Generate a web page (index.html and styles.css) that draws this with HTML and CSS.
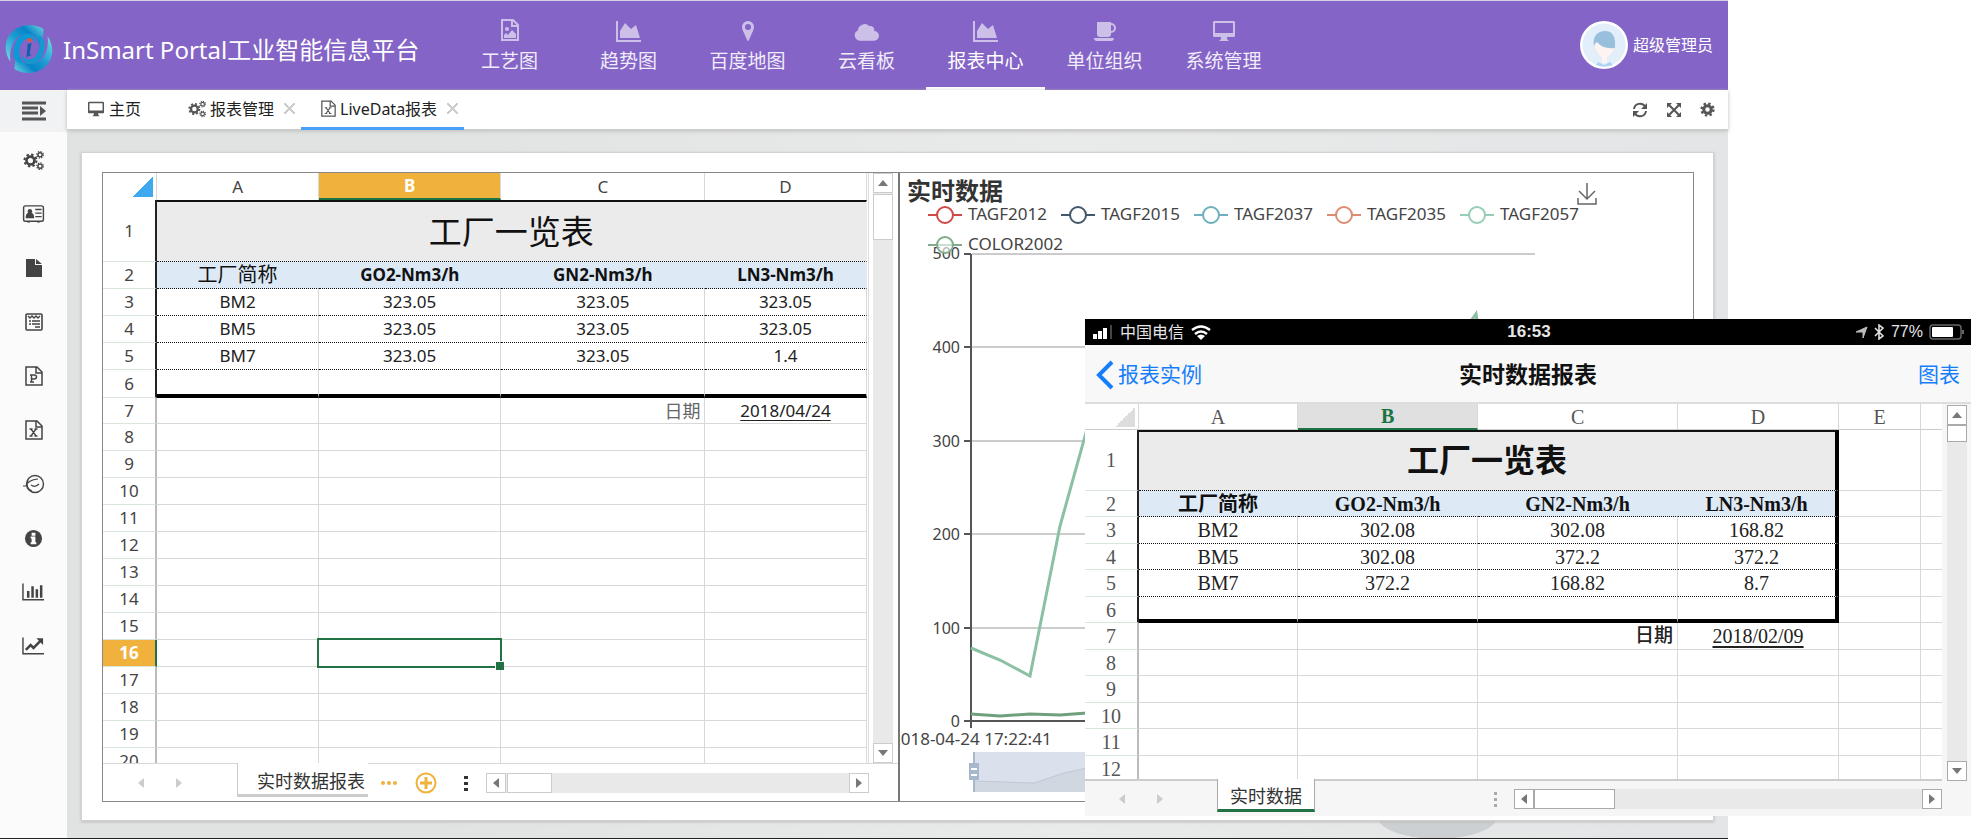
FILE: index.html
```html
<!DOCTYPE html>
<html lang="zh-CN">
<head>
<meta charset="utf-8">
<title>InSmart Portal工业智能信息平台</title>
<link rel="stylesheet" href="styles.css">
</head>
<body>
<svg class="defs" aria-hidden="true">
  <symbol id="i-image" viewBox="0 0 20 24"><path d="M2 2h11l5 5v15H2zM12 2v6h6" fill="none" stroke="currentColor" stroke-width="2"/><circle cx="7" cy="11" r="2" fill="currentColor"/><path d="M4 20v-3l2-2 2 2 4-5 4 4v4z" fill="currentColor"/></symbol>
  <symbol id="i-area" viewBox="0 0 26 22"><path d="M1 1v20h24" fill="none" stroke="currentColor" stroke-width="2"/><path d="M4 18V11l5-8 6 6 5-4 4 13z" fill="currentColor"/></symbol>
  <symbol id="i-pin" viewBox="0 0 14 22"><path fill-rule="evenodd" d="M7 1a6 6 0 0 1 6 6c0 2-1 4-2 6l-3 7q-1 2-2 0l-3-7C2 11 1 9 1 7a6 6 0 0 1 6-6zm0 3a3 3 0 1 0 0 6 3 3 0 0 0 0-6z" fill="currentColor"/></symbol>
  <symbol id="i-cloud" viewBox="0 0 26 20"><path d="M6 19a5.500 5.500 0 0 1-2-10.500A7 7 0 0 1 16 4a4 4 0 0 1 5 5 5 5 0 0 1 0 10z" fill="currentColor"/></symbol>
  <symbol id="i-cup" viewBox="0 0 24 22"><path d="M4 2h14v1a5 5 0 0 1 0 10v1a3 3 0 0 1-3 3H7a3 3 0 0 1-3-3zM18 5v6a3 3 0 0 0 0-6z" fill="currentColor" fill-rule="evenodd"/><path d="M1 18h20a3 3 0 0 1-3 3H4a3 3 0 0 1-3-3z" fill="currentColor"/></symbol>
  <symbol id="i-desktop" viewBox="0 0 24 22"><path fill-rule="evenodd" d="M2 1h20l1 1v14l-1 1h-7v2l2 2H7l2-2v-2H2l-1-1V2zm1 2v10h18V3z" fill="currentColor"/></symbol>
  <symbol id="i-gears" viewBox="0 0 24 24"><g fill="none" stroke="currentColor"><circle cx="8.500" cy="12" r="4.500" stroke-width="3"/><circle cx="8.500" cy="12" r="6.800" stroke-width="2.400" stroke-dasharray="2.700 2.640"/><circle cx="19.500" cy="5.500" r="2.400" stroke-width="1.600"/><circle cx="19.500" cy="5.500" r="3.700" stroke-width="1.500" stroke-dasharray="1.500 1.400"/><circle cx="19.500" cy="18.500" r="2.400" stroke-width="1.600"/><circle cx="19.500" cy="18.500" r="3.700" stroke-width="1.500" stroke-dasharray="1.500 1.400"/></g></symbol>
  <symbol id="i-gear" viewBox="0 0 20 20"><g fill="none" stroke="currentColor"><circle cx="10" cy="10" r="5" stroke-width="4"/><circle cx="10" cy="10" r="8" stroke-width="3" stroke-dasharray="3.200 3.083"/></g></symbol>
  <symbol id="i-card" viewBox="0 0 24 20"><rect x="1" y="1" width="22" height="17" rx="2" fill="none" stroke="currentColor" stroke-width="1.600"/><circle cx="8" cy="7" r="2.500" fill="currentColor"/><path d="M4 14q0-5 4-5t4 5zM14 5h7M14 9h7M14 13h7" fill="currentColor" stroke="currentColor" stroke-width="1.400"/><path d="M5 19h3M16 19h3" stroke="currentColor"/></symbol>
  <symbol id="i-file" viewBox="0 0 18 20"><path d="M1 1h9v6h7v12H1zM11 1l6 5h-6z" fill="currentColor"/></symbol>
  <symbol id="i-form" viewBox="0 0 20 20"><rect x="2" y="2" width="16" height="16" rx="1" fill="none" stroke="currentColor" stroke-width="1.600"/><path d="M4 4l2 2 2-2 2 2 2-2 2 2 2-2M5 9h2M8 9h8M5 12h2M8 12h8M11 15h5" fill="none" stroke="currentColor" stroke-width="1.400"/></symbol>
  <symbol id="i-filep" viewBox="0 0 18 20"><path d="M1 1h11l5 5v13H1zM11 1v6h6" fill="none" stroke="currentColor" stroke-width="1.500"/><path d="M5 16h4M6.500 16V9M5 9h4q2.500 0 2.500 2T9 13H7" fill="none" stroke="currentColor" stroke-width="1.400"/></symbol>
  <symbol id="i-filex" viewBox="0 0 18 20"><path d="M1 1h11l5 5v13H1zM11 1v6h6" fill="none" stroke="currentColor" stroke-width="1.500"/><path d="M6 9l5 7M11 9l-5 7M4.500 9h3M9.500 9h3M4.500 16h3M9.500 16h3" fill="none" stroke="currentColor" stroke-width="1.300"/></symbol>
  <symbol id="i-globe" viewBox="0 0 24 20"><circle cx="13" cy="10" r="8.500" fill="none" stroke="currentColor" stroke-width="1.400"/><path d="M1 12h3M4 12q2-6 12-7M6 6q-3 8 4 11M9 11q4 3 8-1" fill="none" stroke="currentColor" stroke-width="1.200"/></symbol>
  <symbol id="i-info" viewBox="0 0 20 20"><circle cx="10" cy="10" r="9" fill="currentColor"/><path d="M8 4h4v3H8zM7 8h5v6h1v2H7v-2h1v-4H7z" fill="#fff"/></symbol>
  <symbol id="i-bars" viewBox="0 0 24 20"><path d="M1 1v17h22" fill="none" stroke="currentColor" stroke-width="1.500"/><path d="M6.500 16V9M11 16V4M15.500 16V7M20 16V3" stroke="currentColor" stroke-width="2.600"/></symbol>
  <symbol id="i-line" viewBox="0 0 24 20"><path d="M1 1v17h22" fill="none" stroke="currentColor" stroke-width="1.500"/><path d="M4 14l5-5 3 3 7-7" fill="none" stroke="currentColor" stroke-width="2.600"/><path d="M15 2h7v7z" fill="currentColor"/></symbol>
  <symbol id="i-menu" viewBox="0 0 24 20"><path d="M0 2h24M0 7h16M0 12h16M0 18h24" stroke="currentColor" stroke-width="3"/><path d="M18 5l6 5-6 5z" fill="currentColor"/></symbol>
  <symbol id="i-refresh" viewBox="0 0 16 16"><path d="M2 7a6 6 0 0 1 11-2.500M14 9a6 6 0 0 1-11 2.500" fill="none" stroke="currentColor" stroke-width="2"/><path d="M15 1v6H9zM1 15V9h6z" fill="currentColor"/></symbol>
  <symbol id="i-expand" viewBox="0 0 16 16"><path d="M3 3l10 10M13 3L3 13" stroke="currentColor" stroke-width="2"/><path d="M1 1h5L1 6zM15 1v5l-5-5zM1 15v-5l5 5zM15 15h-5l5-5z" fill="currentColor"/></symbol>
</svg>

<div class="app">
  <header class="topbar">
    <div class="brand">
      <svg width="48" height="48" viewBox="0 0 47 48" aria-hidden="true">
        <defs>
          <linearGradient id="lg" x1="0" y1="1" x2="1" y2="0"><stop offset="0" stop-color="#7adfe2"/><stop offset=".45" stop-color="#1c9bd2"/><stop offset=".7" stop-color="#0784c8"/><stop offset="1" stop-color="#6fd8e0"/></linearGradient>
          <path id="blade" d="M38 4C30-1 18-2 9 5-2 13-2 27 5 37 3 22 9 11 20 9c9-1 13 5 14 13 3-6 4-12 4-18z"/>
        </defs>
        <use href="#blade" fill="url(#lg)"/>
        <g transform="rotate(180 23.500 24)"><use href="#blade" fill="url(#lg)"/></g>
        <path d="M20 9c-9 2-13 12-12 23 2 4 5 6 8 7-4-9-3-20 3-24 5-3 9-1 12 3-1-6-5-10-11-9z" fill="#0a9ad6"/>
        <path d="M27 39c9-2 13-12 12-23-2-4-4-5-6-6 2 9 1 19-5 23-5 3-9 1-12-3 1 6 5 10 11 9z" fill="#1597d0"/>
        <path d="M22 19l4-1-2 11 2 1-5 2 1-10z" fill="#0b5fae"/><circle cx="24" cy="15" r="2" fill="#f0502a"/>
      </svg>
      <h1>InSmart Portal工业智能信息平台</h1>
    </div>
    <nav class="mainnav">
      <a href="#"><svg width="20" height="24"><use href="#i-image"/></svg>工艺图</a>
      <a href="#"><svg width="26" height="22"><use href="#i-area"/></svg>趋势图</a>
      <a href="#"><svg width="14" height="22"><use href="#i-pin"/></svg>百度地图</a>
      <a href="#"><svg width="25" height="20"><use href="#i-cloud"/></svg>云看板</a>
      <a href="#" class="active"><svg width="26" height="22"><use href="#i-area"/></svg>报表中心</a>
      <a href="#"><svg width="24" height="22"><use href="#i-cup"/></svg>单位组织</a>
      <a href="#"><svg width="24" height="22"><use href="#i-desktop"/></svg>系统管理</a>
    </nav>
    <div class="user">
      <svg width="48" height="48" viewBox="0 0 48 48" aria-hidden="true"><circle cx="24" cy="24" r="24" fill="#fff"/><circle cx="24" cy="24" r="21.500" fill="#e2effb"/><path d="M15 22c0 8 4 12 7 14v6h5v-6c4-2 8-6 8-14z" fill="#fdf4f1"/><path d="M14 25c-2-10 4-15 11-15 8 0 11 6 10 17-8 1-14-1-18-6q-2 1-3 4z" fill="#98c0dc"/><path d="M16 44l2-3 6 3 6-3 3 3q-9 3-17 0z" fill="#aed2f3"/></svg>
      <span>超级管理员</span>
    </div>
  </header>

  <div class="body">
    <aside class="sidebar">
      <button class="toggle" aria-label="菜单"><svg width="24" height="20"><use href="#i-menu"/></svg></button>
      <a href="#" aria-label="设置"><svg width="21" height="21"><use href="#i-gears"/></svg></a>
      <a href="#" aria-label="名片"><svg width="23" height="18"><use href="#i-card"/></svg></a>
      <a href="#" aria-label="文件"><svg width="18" height="20"><use href="#i-file"/></svg></a>
      <a href="#" aria-label="表单"><svg width="20" height="20"><use href="#i-form"/></svg></a>
      <a href="#" aria-label="演示"><svg width="18" height="20"><use href="#i-filep"/></svg></a>
      <a href="#" aria-label="表格"><svg width="18" height="20"><use href="#i-filex"/></svg></a>
      <a href="#" aria-label="网络"><svg width="24" height="20"><use href="#i-globe"/></svg></a>
      <a href="#" aria-label="信息"><svg width="19" height="19"><use href="#i-info"/></svg></a>
      <a href="#" aria-label="柱图"><svg width="23" height="20"><use href="#i-bars"/></svg></a>
      <a href="#" aria-label="折线"><svg width="23" height="20"><use href="#i-line"/></svg></a>
    </aside>

    <main class="main">
      <div class="tabs">
        <a href="#" class="tab home"><svg width="18" height="16"><use href="#i-desktop"/></svg>主页</a>
        <a href="#" class="tab"><svg width="18" height="18"><use href="#i-gears"/></svg>报表管理<i class="close"></i></a>
        <a href="#" class="tab current"><svg width="15" height="17"><use href="#i-filex"/></svg>LiveData报表<i class="close"></i></a>
        <div class="tools">
          <button aria-label="刷新"><svg width="16" height="16"><use href="#i-refresh"/></svg></button>
          <button aria-label="全屏"><svg width="16" height="16"><use href="#i-expand"/></svg></button>
          <button aria-label="设置"><svg width="15" height="15"><use href="#i-gear"/></svg></button>
        </div>
      </div>

      <div class="canvas">
        <section class="panel">
          <div class="frame">
            <div class="sheet desk">
              <div class="gridrow">
                <div class="gridwrap">
                  <table>
                    <colgroup><col style="width:54px"><col style="width:162px"><col style="width:182px"><col style="width:204px"><col style="width:161px"></colgroup>
                    <thead><tr><th class="corner"></th><th>A</th><th class="on">B</th><th>C</th><th>D</th></tr></thead>
                    <tbody>
                      <tr class="title"><th>1</th><td colspan="4">工厂一览表</td></tr>
                      <tr class="head"><th>2</th><td>工厂简称</td><td>GO2-Nm3/h</td><td>GN2-Nm3/h</td><td>LN3-Nm3/h</td></tr>
                      <tr class="data"><th>3</th><td>BM2</td><td>323.05</td><td>323.05</td><td>323.05</td></tr>
                      <tr class="data"><th>4</th><td>BM5</td><td>323.05</td><td>323.05</td><td>323.05</td></tr>
                      <tr class="data"><th>5</th><td>BM7</td><td>323.05</td><td>323.05</td><td>1.4</td></tr>
                      <tr class="last"><th>6</th><td></td><td></td><td></td><td></td></tr>
                      <tr class="date"><th>7</th><td></td><td></td><td class="label">日期</td><td><u>2018/04/24</u></td></tr>
                      <tr><th>8</th><td></td><td></td><td></td><td></td></tr>
                      <tr><th>9</th><td></td><td></td><td></td><td></td></tr>
                      <tr><th>10</th><td></td><td></td><td></td><td></td></tr>
                      <tr><th>11</th><td></td><td></td><td></td><td></td></tr>
                      <tr><th>12</th><td></td><td></td><td></td><td></td></tr>
                      <tr><th>13</th><td></td><td></td><td></td><td></td></tr>
                      <tr><th>14</th><td></td><td></td><td></td><td></td></tr>
                      <tr><th>15</th><td></td><td></td><td></td><td></td></tr>
                      <tr><th class="on">16</th><td></td><td class="selected"></td><td></td><td></td></tr>
                      <tr><th>17</th><td></td><td></td><td></td><td></td></tr>
                      <tr><th>18</th><td></td><td></td><td></td><td></td></tr>
                      <tr><th>19</th><td></td><td></td><td></td><td></td></tr>
                      <tr><th>20</th><td></td><td></td><td></td><td></td></tr>
                    </tbody>
                  </table>
                </div>
                <div class="vscroll"><button class="up" aria-label="向上"></button><span class="thumb"></span><button class="down" aria-label="向下"></button></div>
              </div>
              <div class="sheetbar">
                <div class="pager"><button class="left" aria-label="上一张"></button><button class="right" aria-label="下一张"></button></div>
                <button class="sheettab">实时数据报表</button>
                <div class="extras">
                  <svg width="16" height="6" aria-hidden="true"><g fill="#f0b23c"><circle cx="2" cy="3" r="2"/><circle cx="8" cy="3" r="2"/><circle cx="14" cy="3" r="2"/></g></svg>
                  <button class="add" aria-label="新增"><svg width="22" height="22"><circle cx="11" cy="11" r="9.500" fill="none" stroke="#f0b23c" stroke-width="2"/><path d="M11 5v12M5 11h12" stroke="#f0b23c" stroke-width="3"/></svg></button>
                  <svg width="4" height="16" aria-hidden="true"><path d="M0 1h4v3H0zM0 7h4v3H0zM0 13h4v3H0z" fill="#333"/></svg>
                </div>
                <div class="hscroll"><button class="left" aria-label="向左"></button><span class="thumb"></span><button class="right" aria-label="向右"></button></div>
              </div>
            </div>

            <div class="chart">
              <svg width="100%" height="100%">
                <g stroke="#ccc" stroke-width="2"><path d="M72 81H635M72 174H635M72 268H635M72 361H635M72 455H635"/></g>
                <g stroke="#555" stroke-width="2"><path d="M71 81V555M64 81h7M64 174h7M64 268h7M64 361h7M64 455h7M64 548H635"/></g>
                <g class="axis" text-anchor="end"><text x="60" y="86">500</text><text x="60" y="180">400</text><text x="60" y="274">300</text><text x="60" y="367">200</text><text x="60" y="461">100</text><text x="60" y="554">0</text></g>
                <text class="legend" x="-9" y="572">2018-04-24 17:22:41</text>
                <path d="M71 475L100 487 130 503 160 353 187 256 250 200 340 290 450 320 576 141 600 300" fill="none" stroke="#8bc0a4" stroke-width="3"/>
                <path d="M71 541L100 543 130 541 160 542 187 540" fill="none" stroke="#6f9f7d" stroke-width="3"/>
                <rect x="74" y="579" width="560" height="40" fill="#dae1ec"/>
                <path d="M74 608L134 610 164 600 187 595V619H74z" fill="#d0d7e1"/><path d="M74 608L134 610 164 600 187 595" fill="none" stroke="#c0c8d6"/>
                <path d="M74 579V619" stroke="#a7b7cc" stroke-width="2"/><rect x="69" y="590" width="10" height="17" fill="#a7b7cc"/><path d="M71 596h6M71 602h6" stroke="#fff" stroke-width="2"/>
                <text class="charttitle" x="7" y="27">实时数据</text>
                <g stroke-width="2" fill="#fff">
                  <path d="M28 42h34" stroke="#cf4a45"/><circle cx="45" cy="42" r="8" stroke="#cf4a45"/>
                  <path d="M161 42h34" stroke="#44586b"/><circle cx="178" cy="42" r="8" stroke="#44586b"/>
                  <path d="M294 42h34" stroke="#6db0bb"/><circle cx="311" cy="42" r="8" stroke="#6db0bb"/>
                  <path d="M427 42h34" stroke="#dd8b72"/><circle cx="444" cy="42" r="8" stroke="#dd8b72"/>
                  <path d="M560 42h34" stroke="#97cdb4"/><circle cx="577" cy="42" r="8" stroke="#97cdb4"/>
                  <path d="M28 72h34" stroke="#80ab8d"/><circle cx="45" cy="72" r="8" stroke="#80ab8d" fill-opacity=".6"/>
                </g>
                <g class="legend"><text x="68" y="47">TAGF2012</text><text x="201" y="47">TAGF2015</text><text x="334" y="47">TAGF2037</text><text x="467" y="47">TAGF2035</text><text x="600" y="47">TAGF2057</text><text x="68" y="77">COLOR2002</text></g>
                <path d="M687 10v16M679 18l8 8 8-8M678 25v6h18v-6" fill="none" stroke="#666" stroke-width="1.500"/>
              </svg>
            </div>
          </div>
        </section>
      </div>
    </main>
  </div>
</div>

<section class="phone">
  <div class="status">
    <div class="carrier">
      <svg width="20" height="14" aria-hidden="true"><path d="M0 9h4v5H0zM5 6h4v8H5zM10 3h4v11h-4z" fill="#fff"/><path d="M17 0h2v14h-2z" fill="#444"/></svg>
      <span>中国电信</span>
      <svg width="20" height="15" viewBox="0 0 20 15" aria-hidden="true"><g fill="none" stroke="#fff" stroke-width="2.400"><path d="M1 5q9-7 18 0M4 9q6-5 12 0"/></g><path d="M6 11q4-3 8 0l-4 4z" fill="#fff"/></svg>
    </div>
    <b>16:53</b>
    <div class="power">
      <svg width="13" height="13" aria-hidden="true"><path d="M12 1L8 12V6H1z" fill="#bbb" stroke="#bbb"/></svg>
      <svg width="11" height="16" aria-hidden="true"><path d="M1 4l8 8-4 3V1l4 3-8 8" fill="none" stroke="#ddd" stroke-width="1.600"/></svg>
      <span>77%</span>
      <svg width="36" height="16" aria-hidden="true"><rect x="1" y="1" width="31" height="14" rx="3" fill="none" stroke="#666" stroke-width="1.500"/><rect x="3" y="3" width="21" height="10" rx="1" fill="#fff"/><path d="M34 6v4" stroke="#666" stroke-width="2"/></svg>
    </div>
  </div>
  <div class="phonenav">
    <a href="#" class="back"><svg width="18" height="30" aria-hidden="true"><path d="M16 2L3 15l13 13" fill="none" stroke="#157efb" stroke-width="4"/></svg>报表实例</a>
    <h2>实时数据报表</h2>
    <a href="#" class="more">图表</a>
  </div>
  <div class="sheet mobile">
    <div class="gridrow">
      <div class="gridwrap">
        <table>
          <colgroup><col style="width:54px"><col style="width:159px"><col style="width:180px"><col style="width:200px"><col style="width:161px"><col style="width:82px"><col style="width:22px"></colgroup>
          <thead><tr><th class="corner"></th><th>A</th><th class="on">B</th><th>C</th><th>D</th><th>E</th><th></th></tr></thead>
          <tbody>
            <tr class="title"><th>1</th><td colspan="4">工厂一览表</td><td></td><td></td></tr>
            <tr class="head"><th>2</th><td>工厂简称</td><td>GO2-Nm3/h</td><td>GN2-Nm3/h</td><td>LN3-Nm3/h</td><td></td><td></td></tr>
            <tr class="data"><th>3</th><td>BM2</td><td>302.08</td><td>302.08</td><td>168.82</td><td></td><td></td></tr>
            <tr class="data"><th>4</th><td>BM5</td><td>302.08</td><td>372.2</td><td>372.2</td><td></td><td></td></tr>
            <tr class="data"><th>5</th><td>BM7</td><td>372.2</td><td>168.82</td><td>8.7</td><td></td><td></td></tr>
            <tr class="last"><th>6</th><td></td><td></td><td></td><td></td><td></td><td></td></tr>
            <tr class="date"><th>7</th><td></td><td></td><td class="label">日期</td><td><u>2018/02/09</u></td><td></td><td></td></tr>
            <tr><th>8</th><td></td><td></td><td></td><td></td><td></td><td></td></tr>
            <tr><th>9</th><td></td><td></td><td></td><td></td><td></td><td></td></tr>
            <tr><th>10</th><td></td><td></td><td></td><td></td><td></td><td></td></tr>
            <tr><th>11</th><td></td><td></td><td></td><td></td><td></td><td></td></tr>
            <tr><th>12</th><td></td><td></td><td></td><td></td><td></td><td></td></tr>
          </tbody>
        </table>
      </div>
      <div class="vscroll"><button class="up" aria-label="向上"></button><span class="thumb"></span><button class="down" aria-label="向下"></button></div>
    </div>
    <div class="sheetbar">
      <div class="pager"><button class="left" aria-label="上一张"></button><button class="right" aria-label="下一张"></button></div>
      <button class="sheettab">实时数据</button>
      <div class="extras"><svg width="4" height="16" aria-hidden="true"><path d="M0 1h3v3H0zM0 7h3v3H0zM0 13h3v3H0z" fill="#aaa"/></svg></div>
      <div class="hscroll"><button class="left" aria-label="向左"></button><span class="thumb"></span><button class="right" aria-label="向右"></button></div>
    </div>
  </div>
</section>
</body>
</html>
```
FILE: styles.css
```css
* { box-sizing: border-box; }
body {
  margin: 0;
  position: relative;
  height: 100vh;
  overflow: hidden;
  background: #fff;
  color: #333;
  font: 16px/1.25 "Noto Sans", "Noto Sans CJK SC", sans-serif;
}
a { color: inherit; text-decoration: none; }
button { margin: 0; padding: 0; border: 0; background: none; font: inherit; color: inherit; }
svg { display: block; flex: none; }
.defs { position: absolute; width: 0; height: 0; }

.app {
  width: 87.67%;
  height: 100vh;
  display: flex;
  flex-direction: column;
  border-top: 1px solid #d8d0e8;
  border-bottom: 1px solid #222;
}

/* header */
.topbar { flex: 0 0 89px; display: flex; background: #8464c6; color: #fff; }
.brand { flex: 0 0 450px; display: flex; align-items: center; gap: 10px; padding: 6px 0 0 5px; }
.brand h1 { margin: 0; padding-top: 2px; font-size: 24px; font-weight: 400; white-space: nowrap; }
.mainnav { display: flex; }
.mainnav a {
  width: 119px;
  display: flex;
  flex-direction: column;
  align-items: center;
  justify-content: flex-end;
  gap: 7px;
  padding-bottom: 14px;
  border-bottom: 3px solid transparent;
  font-size: 19px;
  line-height: 24px;
  color: #f1ecf9;
}
.mainnav svg { color: #cdc0e8; }
.mainnav .active { border-color: #fff; color: #fff; }
.user { margin-left: auto; display: flex; align-items: center; gap: 5px; padding: 0 15px 2px 0; }

/* body */
.body { flex: 1; min-height: 0; display: flex; }
.sidebar { flex: 0 0 67px; display: flex; flex-direction: column; background: #fbfbfb; color: #444; }
.sidebar a { height: 54px; display: flex; align-items: center; justify-content: center; }
.toggle { height: 42px; margin-bottom: 1px; display: flex; align-items: center; justify-content: center; background: #f0f2f4; color: #555; }
.main { flex: 1; min-width: 0; display: flex; flex-direction: column; }
.tabs { flex: 0 0 40px; display: flex; align-items: stretch; background: #fff; border-bottom: 1px solid #ccc; color: #222; z-index: 1; box-shadow: 0 1px 4px #bbb; }
.tab { display: flex; align-items: center; gap: 4px; padding: 0 6px 0 20px; border-bottom: 3px solid transparent; margin-bottom: -1px; }
.tab svg { color: #555; }
.tab.home { padding-right: 27px; }
.current { border-color: #4aa0f8; }
.close { width: 11px; height: 11px; margin-left: 6px; background: linear-gradient(45deg, transparent 45%, #ccc 45% 55%, transparent 55%), linear-gradient(-45deg, transparent 45%, #ccc 45% 55%, transparent 55%); }
.tools { margin-left: auto; display: flex; align-items: center; gap: 18px; padding-right: 13px; color: #555; }
.canvas {
  flex: 1;
  min-height: 0;
  display: flex;
  padding: 22px 14px 17px;
  background:
    radial-gradient(ellipse 60px 22px at 82.500% 687px, #cdd0d2 98%, transparent),
    linear-gradient(90deg, #e1e3e3 20%, #e9eaea 60%, #e3e5e6);
}
.panel { flex: 1; min-width: 0; display: flex; padding: 19px 19px 18px 20px; background: #fff; border: 1px solid #d2d2d2; box-shadow: 0 1px 3px #bbb; }
.frame { flex: 1; min-width: 0; display: flex; border: 1px solid #888; }
.chart { flex: 1; min-width: 0; overflow: hidden; }
.axis, .legend { font-size: 16px; fill: #444; }
.legend { font-size: 17px; }
.charttitle { font-size: 24px; font-weight: 700; fill: #333; }

/* spreadsheets */
.sheet { display: flex; flex-direction: column; min-width: 0; }
.gridrow { flex: 1; min-height: 0; display: flex; }
.gridwrap { flex: 1; min-width: 0; overflow: hidden; }
.sheet table { width: 100%; table-layout: fixed; border-collapse: separate; border-spacing: 0; }
.sheet th, .sheet td { padding: 0; height: 27px; line-height: 24px; text-align: center; font-weight: 400; border: 0 solid #d8d8d8; border-width: 0 1px 1px 0; white-space: nowrap; }
.sheet td { color: #222; }
.sheet thead th { height: 27px; color: #444; border-bottom: 0; }
.sheet tbody th { color: #444; border-bottom-color: #dbe6db; border-right: 2px solid #bbb; }
.sheet .title td[colspan] { background: #ebebeb; border-top: 2px solid #111; border-bottom: 1px dotted #111; border-right-color: #ebebeb; color: #111; }
.sheet .head td:nth-child(-n+5) { background: #dde9f5; border-bottom: 1px dotted #111; border-right-color: #dde9f5; color: #111; font-weight: 700; }
.sheet .data td:nth-child(-n+5) { border-bottom: 1px dotted #111; }
.sheet .last td:nth-child(-n+5) { border-bottom: 4px solid #000; }
.sheet .title th, .sheet .head th, .sheet .data th, .sheet .last th { border-right-color: #222; }
.sheet .label { text-align: right; padding-right: 4px; }
.sheet u { text-underline-offset: 3px; }

.desk { flex: 0 0 50.1%; border-right: 2px solid #777; font-size: 17px; }
.desk .gridrow { gap: 4px; padding-right: 5px; border-bottom: 1px solid #d8d8d8; }
.desk .gridwrap { border-right: 1px solid #ddd; padding-right: 1px; }
.desk .corner { background: linear-gradient(135deg, transparent 50%, #3fa9f0 50%) no-repeat 30px 4px / 20px 20px; }
.desk thead .on { background: #f0b23c; color: #fff; font-weight: 700; border-bottom: 2px solid #1c7344; }
.desk tbody .on { background: #f0b23c; color: #fff; font-weight: 700; border-right-color: #1c7344; }
.desk .title > * { height: 62px; }
.desk .title td { font-size: 33px; line-height: 40px; }
.desk .head td:nth-child(2) { font-size: 20px; font-weight: 400; }
.desk .last > * { height: 28px; }
.desk .date > * { height: 26px; }
.desk .label { font-size: 18px; color: #666; }
.desk .selected { position: relative; }
.selected::after { content: ""; position: absolute; z-index: 1; inset: -2px; border: 2px solid #217346; }
.selected::before { content: ""; position: absolute; z-index: 2; right: -4px; bottom: -4px; width: 8px; height: 8px; background: #217346; border: solid #fff; border-width: 1px 0 0 1px; }

.vscroll { flex: none; width: 20px; display: flex; flex-direction: column; background: #e9e9e9; }
.hscroll { flex: none; height: 20px; display: flex; background: #e9e9e9; }
.vscroll button, .hscroll button, .thumb { background: #fff; border: 1px solid #ccc; }
.vscroll button { height: 20px; }
.hscroll button { width: 20px; }
.vscroll .down { margin-top: auto; }
.hscroll .right { margin-left: auto; }
.vscroll .thumb { height: 46px; margin-top: 1px; }
.hscroll .thumb { width: 45px; margin-left: 1px; }
.up, .down, .left, .right { display: flex; align-items: center; justify-content: center; }
.up::before, .down::before, .left::before, .right::before { content: ""; border: 5px solid transparent; }
.up::before { border-top: 0; border-bottom: 6px solid #777; }
.down::before { border-bottom: 0; border-top: 6px solid #777; }
.left::before { border-left: 0; border-right: 6px solid #777; }
.right::before { border-right: 0; border-left: 6px solid #777; }

.sheetbar { flex: none; display: flex; align-items: center; }
.pager { display: flex; align-items: center; gap: 32px; }
.pager .left::before { border-right-color: #ccc; }
.pager .right::before { border-left-color: #ccc; }
.sheettab { align-self: flex-start; white-space: nowrap; }
.extras { display: flex; align-items: center; }
.sheetbar .hscroll { flex: 1; }

.desk .sheetbar { height: 37px; padding-right: 29px; }
.desk .pager { width: 134px; padding-left: 35px; }
.desk .sheettab { height: 34px; margin-top: -1px; width: 131px; padding: 6px 3px 0 0; text-align: right; font-size: 18px; background: #fff; border: solid #ccc; border-width: 0 0 3px 1px; }
.desk .extras { gap: 18px; padding: 0 18px 0 13px; }
.desk .extras svg:last-child { margin-left: 9px; }
.desk .extras .add svg { margin-left: 0; }

/* phone overlay */
.phone {
  position: absolute;
  top: 319px;
  right: 0;
  bottom: 23px;
  width: 44.95%;
  display: flex;
  flex-direction: column;
  background: #fff;
  z-index: 3;
}
.status { flex: 0 0 26px; display: grid; grid-template-columns: 1fr auto 1fr; align-items: center; padding: 0 6px 0 8px; background: #000; color: #e6e6e6; }
.carrier, .power { display: flex; align-items: center; gap: 7px; }
.power { justify-content: flex-end; gap: 6px; font-family: "Liberation Sans", sans-serif; }
.status b { font-family: "Liberation Sans", sans-serif; font-size: 17px; }
.phonenav { flex: 0 0 59px; display: grid; grid-template-columns: 1fr auto 1fr; align-items: center; padding: 2px 11px 0; background: #f8f8f8; border-bottom: 2px solid #ddd; font-size: 21px; color: #157efb; }
.phonenav h2 { margin: 0; font-size: 23px; font-weight: 700; color: #111; }
.back { display: flex; align-items: center; gap: 4px; }
.more { text-align: right; }
.mobile { flex: 1; min-height: 0; background: #f6f6f6; font-family: "Liberation Serif", "Noto Sans CJK SC", serif; font-size: 20px; }
.mobile .gridrow { padding-right: 4px; gap: 5px; }
.mobile .gridwrap { background: #fff; border-bottom: 2px solid #ccc; }
.mobile .vscroll { margin-top: 1px; }
.mobile .vscroll .thumb { height: 17px; margin-top: 0; }
.mobile .vscroll button, .mobile .hscroll button, .mobile .thumb { border: 1px solid #aaa; }
.mobile thead th { height: 26px; border-bottom: 1px solid #ccc; color: #555; }
.mobile tbody th { color: #555; }
.mobile .corner { background: linear-gradient(135deg, transparent 50%, #ddd 50%) no-repeat 30px 3px / 20px 20px; }
.mobile thead .on { background: #e0e0e0; color: #1c7344; font-weight: 700; border-bottom: 2px solid #1c7344; }
.mobile tbody tr > * { height: 26px; }
.mobile tbody tr:nth-child(odd) > * { height: 27px; }
.mobile tbody tr.title > * { height: 61px; }
.mobile .title td { font-size: 32px; line-height: 40px; font-weight: 700; }
.mobile .title td:nth-child(2), .mobile .head td:nth-child(5), .mobile .data td:nth-child(5), .mobile .last td:nth-child(5) { border-right: 4px solid #000; }
.mobile .label { font-size: 19px; font-weight: 500; }
.mobile .sheetbar { height: 35px; padding-right: 29px; }
.mobile .pager { width: 132px; padding-left: 34px; }
.mobile .sheettab { height: 33px; margin-top: -2px; padding-top: 3px; width: 98px; font-family: "Noto Sans CJK SC", sans-serif; font-size: 18px; background: #fff; border: solid #aaa; border-width: 0 1px 3px; border-bottom-color: #217346; }
.mobile .extras { flex: 0 0 199px; justify-content: flex-end; padding-right: 16px; }
.mobile .hscroll .thumb { width: 81px; margin-left: 0; }
```
